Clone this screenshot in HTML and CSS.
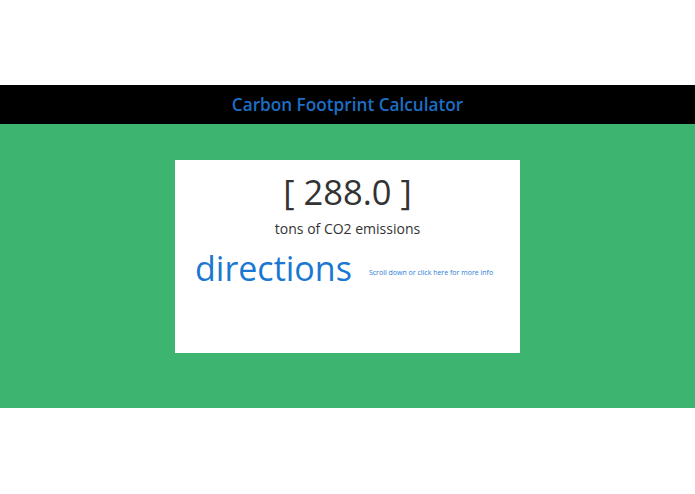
FILE: index.html
```html
<!DOCTYPE html>
<html>
<head>
<meta charset="utf-8">
<link rel="stylesheet" href="styles.css">
</head>
<body>
<div class="top-space"></div>
<header class="titlebar"><h1 class="title">Carbon Footprint Calculator</h1></header>
<main class="hero">
  <section class="card">
    <div class="amount">[ 288.0 ]</div>
    <div class="unit">tons of CO2 emissions</div>
    <div class="dir-row">
      <span class="dir">directions</span>
      <a class="more" href="#">Scroll down or click here for more info</a>
    </div>
  </section>
</main>
</body>
</html>
```
FILE: styles.css
```css
html, body { margin: 0; padding: 0; background: #fff; }
body { font-family: "Open Sans", "Noto Sans", sans-serif; font-variant-ligatures: none; }
.top-space { height: 85px; }
.titlebar { background: #000; height: 39px; display: flex; align-items: center; justify-content: center; }
.title { margin: 0; font-size: 17.2px; font-weight: 600; color: #1c6fc4; }
.hero { background: #3eb471; height: 284px; padding-top: 36px; box-sizing: border-box; display: flex; justify-content: center; align-items: flex-start; }
.card { background: #fff; width: 345px; height: 193px; box-sizing: border-box; padding: 8px 20px 0; display: flex; flex-direction: column; align-items: center; }
.amount { font-size: 34.5px; color: #333; line-height: 48px; }
.unit { font-size: 14px; color: #333; margin-top: 3px; line-height: 20px; }
.dir-row { align-self: stretch; display: flex; align-items: center; margin-top: 6px; }
.dir { font-size: 34px; color: #1a78d2; line-height: 46px; }
.more { font-size: 7px; color: #2a7ed6; text-decoration: none; margin-left: 17px; margin-top: 8px; white-space: nowrap; }
```
